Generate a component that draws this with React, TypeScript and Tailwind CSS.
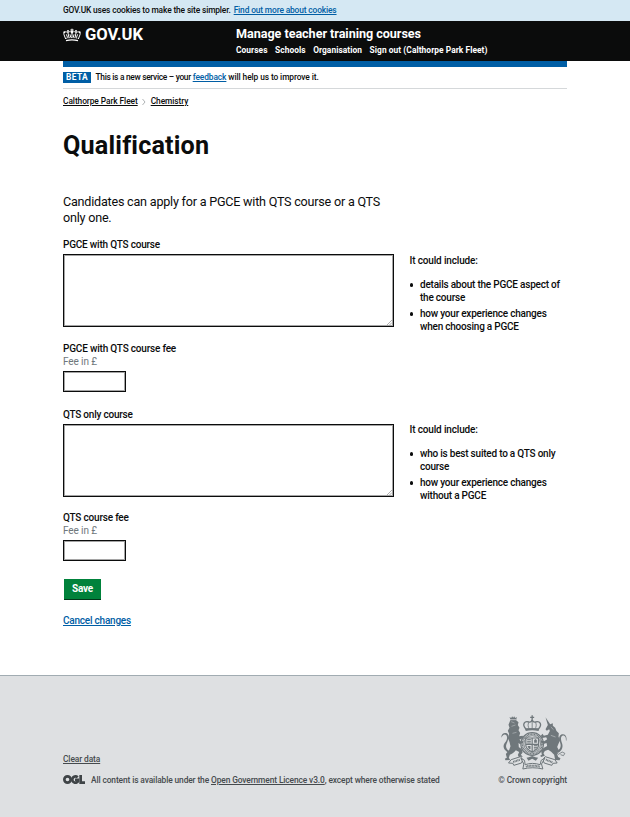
import type { ReactNode } from "react";

function Crown() {
  return (
    <svg viewBox="0 0 54 42" className="h-[14px] w-[18px] shrink-0" fill="none" stroke="#fff">
      <path d="M9 38C20 35 34 35 45 38" strokeWidth="4" />
      <path d="M9 31C20 28 34 28 45 31" strokeWidth="2.5" strokeDasharray="3 2" />
      <path d="M8 33L3 20C0 12 9 8 15 15L18 29M46 33L51 20C54 12 45 8 39 15L36 29" strokeWidth="3" />
      <path d="M15 15C19 9 24 10 27 16C30 10 35 9 39 15" strokeWidth="3" />
      <path d="M27 2V29M22 6H32M10 19L14 29M44 19L40 29M21 19L23 28M33 19L31 28" strokeWidth="3" />
      <g fill="#fff" stroke="none">
        <circle cx="27" cy="12" r="3.5" />
        <circle cx="15" cy="9" r="3" />
        <circle cx="39" cy="9" r="3" />
        <circle cx="4" cy="13" r="3" />
        <circle cx="50" cy="13" r="3" />
      </g>
    </svg>
  );
}

function RoyalArms() {
  return (
    <svg viewBox="64 43 200 168" className="h-[56px] w-[67px]" fill="#6f777b" stroke="none">
      {/* crown above the shield */}
      <path d="M158 44h4v4h4v4h-4v5h-4v-5h-4v-4h4z" />
      <g fill="none" stroke="#6f777b" strokeWidth="4">
        <path d="M141 85C128 70 138 60 150 64C155 65 159 61 160 57C161 61 165 65 170 64C182 60 192 70 179 85Z" />
        <path d="M160 58V84M150 65C146 72 148 79 151 84M170 65C174 72 172 79 169 84" strokeWidth="2.5" />
        <path d="M140 88C153 85 167 85 180 88" strokeWidth="6" />
      </g>
      {/* garter and quartered shield */}
      <circle cx="160" cy="130" r="34" fill="none" stroke="#6f777b" strokeWidth="3.5" />
      <circle cx="160" cy="130" r="29.5" fill="none" stroke="#6f777b" strokeWidth="5" strokeDasharray="3 1.5" />
      <circle cx="160" cy="130" r="25" fill="none" stroke="#6f777b" strokeWidth="2.5" />
      <path d="M141 112H179V134C179 144 171 149 160 154C149 149 141 144 141 134Z" fill="none" stroke="#6f777b" strokeWidth="3.5" />
      <path d="M160 112V153M141 131H179" fill="none" stroke="#6f777b" strokeWidth="3.5" />
      <path d="M145 117H156M145 122H156M145 127H156M165 135H176M165 140H175M165 145H171" stroke="#6f777b" strokeWidth="3" />
      <path d="M166 126V118L170 115L174 118V126ZM146 136H155V146L150 144Z" />
      {/* lion */}
      <path d="M95 57L92 49L97 52L100 47L103 51L106 47L109 52L114 49L112 59L119 65L117 73L122 81L119 89L124 97L121 107L131 105L134 110L126 116L122 116L125 122L132 122L133 127L123 130L119 127L120 140C126 142 132 148 131 156L126 162L132 168L120 169L117 163L121 154L111 149C106 155 100 160 93 162L90 171L94 178L80 179L78 174L84 171L81 160L91 148L95 137L92 124L87 112L91 100L87 90L92 81L89 72Z" />
      <path d="M93 158C79 152 69 140 77 128C83 120 88 111 82 103C77 98 70 104 68 111C66 99 77 94 84 98C94 104 88 119 83 130C79 140 84 148 94 152Z" />
      <path d="M97 63L107 67M98 77L110 73M101 98L113 95" stroke="#dee0e2" strokeWidth="1.2" />
      <path d="M94 57H112" stroke="#dee0e2" strokeWidth="2" />
      {/* unicorn */}
      <path d="M200 50L214 71L222 68L222 75L229 81L233 91L240 98L239 108L244 118L239 129L235 139L240 149L234 158L238 169L245 173L242 179L229 178L226 162L217 153L208 147L198 151L194 158L198 165L187 169L184 165L189 162L187 151L194 142L205 136L203 127L194 130L184 124L188 120L196 122L205 116L202 110L190 112L186 105L191 99L195 105L207 102L213 91L211 86L204 90L200 86L207 73Z" />
      <path d="M236 158C252 150 254 136 248 123C244 112 248 101 257 106C263 110 260 117 262 121C266 109 259 98 249 101C239 106 239 115 244 126C248 138 244 147 234 151Z" />
      <path d="M216 79L224 87M216 104L230 109" stroke="#dee0e2" strokeWidth="1.4" />
      <path d="M226 151L239 161L250 154L258 158L254 165L245 162" fill="none" stroke="#6f777b" strokeWidth="2.5" />
      {/* motto ribbon */}
      <g fill="#dee0e2" stroke="#6f777b" strokeWidth="3">
        <path d="M89 187L97 177L125 168L132 177L128 187L105 194L102 188Z" />
        <path d="M235 187L228 177L199 168L192 177L196 187L219 194L222 188Z" />
        <path d="M126 173L135 190L132 205C150 200 173 200 192 205L188 190L198 173L187 179L184 192C168 187 153 187 139 192L137 179Z" />
      </g>
      <path d="M103 184L123 177M201 177L221 185M141 198C154 194 169 194 183 198" fill="none" stroke="#6f777b" strokeWidth="6" strokeDasharray="3 1.5" />
      <path d="M143 171L149 180L160 174L171 180L178 171L170 170L160 166L150 170Z" />
    </svg>
  );
}

function OglLogo() {
  return (
    <svg viewBox="0 0 66 27" className="relative -top-px mr-[6px] h-[9px] w-[22px] shrink-0" fill="none" stroke="#3f4447" strokeWidth="8">
      <circle cx="13.5" cy="13.5" r="9.5" />
      <path d="M44 7A9.5 9.5 0 1 0 45 19.5V14.5H36" />
      <path d="M53 0V23H66" />
    </svg>
  );
}

function Writing() {
  return (
    <div className="relative h-[73px] w-[331px]">
      <textarea className="block h-full w-full resize-none border border-[#0b0c0c] bg-white p-1 shadow-[inset_0_0_0_1px_#a5a5a5] outline-none" />
      <svg viewBox="0 0 6 6" className="absolute right-[2px] bottom-[2px] h-[5px] w-[5px]" stroke="#888" strokeWidth=".8">
        <path d="M0 6L6 0M3 6L6 3" />
      </svg>
    </div>
  );
}

function Fee({ label }: { label: string }) {
  return (
    <div>
      <div className="h-[13px] text-[10px] leading-[13px] font-medium tracking-[-0.19px]">{label}</div>
      <div className="h-[13px] text-[10px] leading-[13px] tracking-[-0.1px] text-[#6f777b]">Fee in £</div>
      <input className="mt-[3px] block h-[21px] w-[63px] border border-[#0b0c0c] bg-white px-1 shadow-[inset_0_0_0_1px_#a5a5a5] outline-none" />
    </div>
  );
}

function Hints({ children }: { children: ReactNode }) {
  return (
    <div className="text-[10px] leading-[13px] font-medium tracking-[-0.22px] whitespace-nowrap">
      <p className="tracking-[-0.15px]">It could include:</p>
      <ul className="mt-[11px] flex flex-col gap-[3px]">{children}</ul>
    </div>
  );
}

function Hint({ children }: { children: ReactNode }) {
  return (
    <li className="flex gap-[7px]">
      <span className="mt-[5px] h-[3.5px] w-[3.5px] shrink-0 rounded-full bg-[#0b0c0c]" />
      <span>{children}</span>
    </li>
  );
}

export default function App() {
  return (
    <div className="h-[817px] w-[630px] overflow-hidden bg-white font-[Roboto,'Liberation_Sans',sans-serif] text-[#0b0c0c]">
      <div className="flex h-[21px] items-start bg-[#d5e8f3] px-[63px] text-[8.4px] leading-[20px] font-medium tracking-[-0.14px] whitespace-nowrap">
        <span>GOV.UK uses cookies to make the site simpler.</span>
        <a className="ml-[3px] text-[#005ea5] underline">Find out more about cookies</a>
      </div>

      <header className="flex h-[40px] bg-[#0b0c0c] px-[63px] whitespace-nowrap text-white">
        <div className="flex h-[27px] w-[173px] items-center gap-[4px]">
          <Crown />
          <span className="text-[16.6px] leading-[20px] font-bold">GOV.UK</span>
        </div>
        <div className="pt-[5px]">
          <div className="text-[12.6px] leading-[16px] font-bold tracking-[-0.04px]">Manage teacher training courses</div>
          <nav className="flex gap-[7.5px] text-[8.4px] leading-[16px] font-bold tracking-[0.06px]">
            <a>Courses</a>
            <a>Schools</a>
            <a>Organisation</a>
            <a>Sign out (Calthorpe Park Fleet)</a>
          </nav>
        </div>
      </header>

      <main className="h-[614px] px-[63px]">
        <div className="h-[6px] bg-[#005ea5]" />
        <div className="flex h-[22px] items-center border-b border-[#d5d8da] text-[8.4px] font-medium whitespace-nowrap">
          <span className="mr-[4.5px] flex h-[11px] w-[28px] items-center justify-center bg-[#005ea5] text-[8.4px] font-bold tracking-[0.4px] text-white">BETA</span>
          <span className="tracking-[-0.3px]">
            This is a new service – your <a className="tracking-[-0.1px] text-[#005ea5] underline">feedback</a>
            <span className="tracking-[-0.1px]"> will help us to improve it.</span>
          </span>
        </div>
        <div className="flex h-[25px] items-center text-[8.4px] font-medium tracking-[-0.08px] whitespace-nowrap">
          <a className="underline">Calthorpe Park Fleet</a>
          <svg viewBox="0 0 4 6" className="mx-[4.5px] h-[6px] w-[4px]" fill="none" stroke="#9a9fa2" strokeWidth=".8">
            <path d="M.5 0L3 3L.5 6" />
          </svg>
          <a className="underline">Chemistry</a>
        </div>
        <h1 className="mt-[16px] text-[25.2px] leading-[32px] font-bold tracking-[0.17px]">Qualification</h1>
        <p className="mt-[32px] text-[12.6px] leading-[16px] tracking-[-0.22px] whitespace-nowrap">
          Candidates can apply for a PGCE with QTS course or a QTS
          <br />
          only one.
        </p>

        <div className="mt-[12px] flex gap-[15.5px]">
          <div>
            <div className="h-[16px] text-[10px] leading-[13px] font-medium tracking-[-0.2px]">PGCE with QTS course</div>
            <Writing />
            <div className="mt-[15px]">
              <Fee label="PGCE with QTS course fee" />
            </div>
          </div>
          <div className="pt-[16px]">
            <Hints>
              <Hint>details about the PGCE aspect of<br />the course</Hint>
              <Hint>how your experience changes<br />when choosing a PGCE</Hint>
            </Hints>
          </div>
        </div>

        <div className="mt-[16px] flex gap-[15.5px]">
          <div>
            <div className="h-[16px] text-[10px] leading-[13px] font-medium tracking-[-0.22px]">QTS only course</div>
            <Writing />
            <div className="mt-[14px]">
              <Fee label="QTS course fee" />
            </div>
          </div>
          <div className="pt-[15px]">
            <Hints>
              <Hint>who is best suited to a QTS only<br />course</Hint>
              <Hint>how your experience changes<br />without a PGCE</Hint>
            </Hints>
          </div>
        </div>

        <button className="mt-[18px] ml-[1px] block h-[21px] w-[37px] border-b border-[#003618] bg-[#00823b] text-[10px] leading-[20px] font-bold tracking-[-0.15px] text-white">Save</button>
        <a className="mt-[14px] block text-[10px] leading-[13px] font-medium tracking-[-0.22px] text-[#005ea5] underline">Cancel changes</a>
      </main>

      <footer className="flex h-[142px] items-end justify-between border-t border-[#a1acb2] bg-[#dee0e2] px-[63px] pb-[30px] text-[8.4px] leading-[14px] font-medium whitespace-nowrap text-[#454a4d]">
        <div>
          <a className="block tracking-[-0.1px] underline">Clear data</a>
          <div className="mt-[7px] flex items-center">
            <OglLogo />
            <span className="tracking-[-0.11px]">
              All content is available under the <a className="underline">Open Government Licence v3.0</a>, except where otherwise stated
            </span>
          </div>
        </div>
        <div className="flex flex-col items-end">
          <RoyalArms />
          <span className="mt-[2px] tracking-[-0.06px]">© Crown copyright</span>
        </div>
      </footer>
    </div>
  );
}
